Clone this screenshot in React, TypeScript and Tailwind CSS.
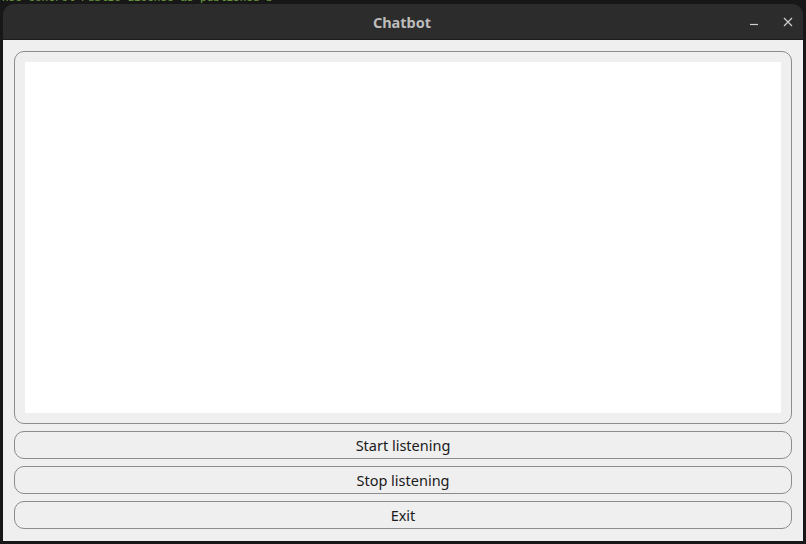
import React from "react";

export default function App() {
  const font = { fontFamily: '"Noto Sans", "DejaVu Sans", sans-serif' };
  return (
    <div className="relative w-[806px] h-[544px] bg-[#171717] overflow-hidden" style={font}>
      <div className="absolute left-[2px] top-[-8px] text-[11px] leading-[12px] text-[#6fa040] whitespace-pre" style={{ fontFamily: '"Liberation Mono", monospace' }}>
        {"nse control Public License as published b"}
      </div>
      <div className="absolute left-[3px] top-[4px] w-[800px] h-[537px] flex flex-col">
        <div className="relative h-[36px] bg-[#2c2c2c] rounded-t-[11px] border-b border-[#1c1c1c] flex items-center justify-center pt-[2px]">
          <span className="text-[14.5px] font-bold text-[#bdbdbd] pr-[2px]">Chatbot</span>
          <svg className="absolute left-[744px] top-[12px]" width="14" height="14" viewBox="0 0 14 14">
            <line x1="3" y1="8.5" x2="11" y2="8.5" stroke="#cfcfcf" strokeWidth="1.2" />
          </svg>
          <svg className="absolute left-[778px] top-[11px]" width="14" height="14" viewBox="0 0 14 14">
            <path d="M3 3 L11 11 M11 3 L3 11" stroke="#cfcfcf" strokeWidth="1.2" />
          </svg>
        </div>
        <div className="flex-1 bg-[#efefef] px-[11px] pt-[11px] pb-[11px] flex flex-col gap-[7px]">
          <div className="h-[373px] border border-[#8c8c8c] rounded-[10px] p-[10px]">
            <div className="w-full h-full bg-white" />
          </div>
          {["Start listening", "Stop listening", "Exit"].map((t) => (
            <button
              key={t}
              className="h-[28px] border border-[#8c8c8c] rounded-[10px] bg-[#efefef] text-[14.5px] text-[#1a1a1a] flex items-center justify-center pt-[2px]"
            >
              {t}
            </button>
          ))}
        </div>
      </div>
    </div>
  );
}
